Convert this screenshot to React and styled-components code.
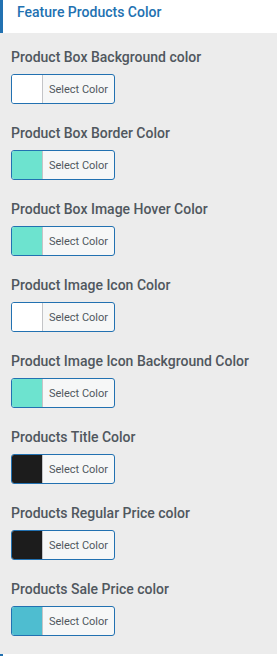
import React from 'react'
import styled, { createGlobalStyle } from 'styled-components'

const GlobalStyle = createGlobalStyle`
  html, body {
    margin: 0;
    padding: 0;
    background: #fff;
  }
  body {
    font-family: Roboto, "Liberation Sans", sans-serif;
  }
`

const Panel = styled.div`
  width: 277px;
  display: flex;
  flex-direction: column;
`

const Header = styled.div`
  height: 33px;
  box-sizing: border-box;
  background: #fff;
  border-left: 3px solid #2271b1;
  padding: 2px 0 0 14px;
  color: #2271b1;
  font-size: 14px;
  font-weight: 500;
  line-height: 20px;
`

const Section = styled.div`
  background: #ececec;
  padding: 14px 11px 18px;
  display: flex;
  flex-direction: column;
`

const Control = styled.div`
  display: flex;
  flex-direction: column;
  align-items: flex-start;
  gap: 7px;
  margin-bottom: 19px;

  &:last-child {
    margin-bottom: 0;
  }
`

const Label = styled.div`
  color: #50575e;
  font-size: 14px;
  font-weight: 500;
  line-height: 20px;
`

const ColorButton = styled.button`
  display: flex;
  align-items: stretch;
  width: 104px;
  height: 30px;
  padding: 0;
  border: 1px solid #2271b1;
  border-radius: 3px;
  background: #f6f7f7;
  overflow: hidden;
  cursor: pointer;
`

const Swatch = styled.span`
  width: 30px;
  background: ${p => p.color};
  border-right: 1px solid #c3c4c7;
`

const ButtonText = styled.span`
  flex: 1;
  display: flex;
  align-items: center;
  justify-content: center;
  color: #50575e;
  font-family: Roboto, "Liberation Sans", sans-serif;
  font-size: 11px;
`

const Footer = styled.div`
  height: 2px;
  background: #fff;
  border-left: 3px solid #2271b1;
`

const controls = [
  { label: 'Product Box Background color', color: '#ffffff' },
  { label: 'Product Box Border Color', color: '#6de3cf' },
  { label: 'Product Box Image Hover Color', color: '#6de3cf' },
  { label: 'Product Image Icon Color', color: '#ffffff' },
  { label: 'Product Image Icon Background Color', color: '#6de3cf' },
  { label: 'Products Title Color', color: '#1c1c1c' },
  { label: 'Products Regular Price color', color: '#1c1c1c' },
  { label: 'Products Sale Price color', color: '#4ebdd0' },
]

export default function App() {
  return (
    <>
      <GlobalStyle />
      <Panel>
        <Header>Feature Products Color</Header>
        <Section>
          {controls.map(c => (
            <Control key={c.label}>
              <Label>{c.label}</Label>
              <ColorButton>
                <Swatch color={c.color} />
                <ButtonText>Select Color</ButtonText>
              </ColorButton>
            </Control>
          ))}
        </Section>
        <Footer />
      </Panel>
    </>
  )
}
